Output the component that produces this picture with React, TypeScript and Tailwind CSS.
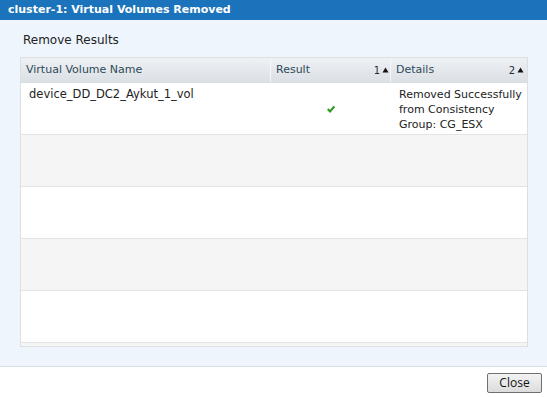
import React from "react";

const rows = [0, 1, 2, 3, 4];

function SortMark({ n }: { n: number }) {
  return (
    <span className="ml-auto flex items-center gap-[2px] text-[10px] text-[#1f2f3a]">
      {n}
      <svg width="7" height="6" viewBox="0 0 7 6">
        <path d="M3.5 0.5 L6.5 5.5 L0.5 5.5 Z" fill="#111" />
      </svg>
    </span>
  );
}

export default function App() {
  return (
    <div className="w-[547px] h-[397px] flex flex-col bg-white font-['DejaVu_Sans',sans-serif]">
      <div className="h-[20px] bg-[#1b73bb] pl-[8px] text-white font-bold text-[11px] leading-[20px]">
        cluster-1: Virtual Volumes Removed
      </div>

      <div className="flex-1 bg-[#eef5fd] border-b border-[#d6dee8] px-[20px] pt-[12px]">
        <div className="text-[12px] leading-[16px] text-[#222] pl-[3px]">Remove Results</div>

        <div className="mt-[9px] w-[508px] h-[290px] border border-[#dedede] bg-[#f5f5f5] flex flex-col overflow-hidden">
          <div className="h-[25px] flex bg-gradient-to-b from-[#eef1f4] to-[#dbe0e6] border-b border-[#d8dde3] text-[11px] text-[#2e4a58] shrink-0">
            <div className="w-[250px] flex items-center pl-[5px] border-r border-[#f4f6f8]">Virtual Volume Name</div>
            <div className="w-[120px] flex items-center pl-[5px] pr-[1px] border-r border-[#f4f6f8]">
              Result
              <SortMark n={1} />
            </div>
            <div className="flex-1 flex items-center pl-[5px] pr-[3px]">
              Details
              <SortMark n={2} />
            </div>
          </div>

          {rows.map((i) => (
            <div
              key={i}
              className={`h-[52px] shrink-0 flex border-b border-[#e4e4e4] text-[11.5px] leading-[15px] text-[#222] ${
                i % 2 === 0 ? "bg-white" : "bg-[#f5f5f5]"
              }`}
            >
              {i === 0 && (
                <>
                  <div className="w-[250px] pl-[8px] pt-[4px]">device_DD_DC2_Aykut_1_vol</div>
                  <div className="w-[120px] flex items-center justify-center">
                    <svg width="8" height="8" viewBox="0 0 8 8">
                      <path d="M0.8 4 L3 6.5 L7.3 1.5" stroke="#2a9a1e" strokeWidth="2" fill="none" />
                    </svg>
                  </div>
                  <div className="flex-1 pl-[8px] pt-[4px] whitespace-nowrap text-[11px]">
                    Removed Successfully
                    <br />
                    from Consistency
                    <br />
                    Group: CG_ESX
                  </div>
                </>
              )}
            </div>
          ))}
        </div>
      </div>

      <div className="h-[30px] flex justify-end items-start pt-[6px] pr-[5px]">
        <button className="w-[55px] h-[20px] border border-[#707070] rounded-[2px] bg-gradient-to-b from-[#f3f3f3] to-[#dcdcdc] text-[12px] text-[#111] font-['Open_Sans',sans-serif] leading-[18px]">
          Close
        </button>
      </div>
    </div>
  );
}
